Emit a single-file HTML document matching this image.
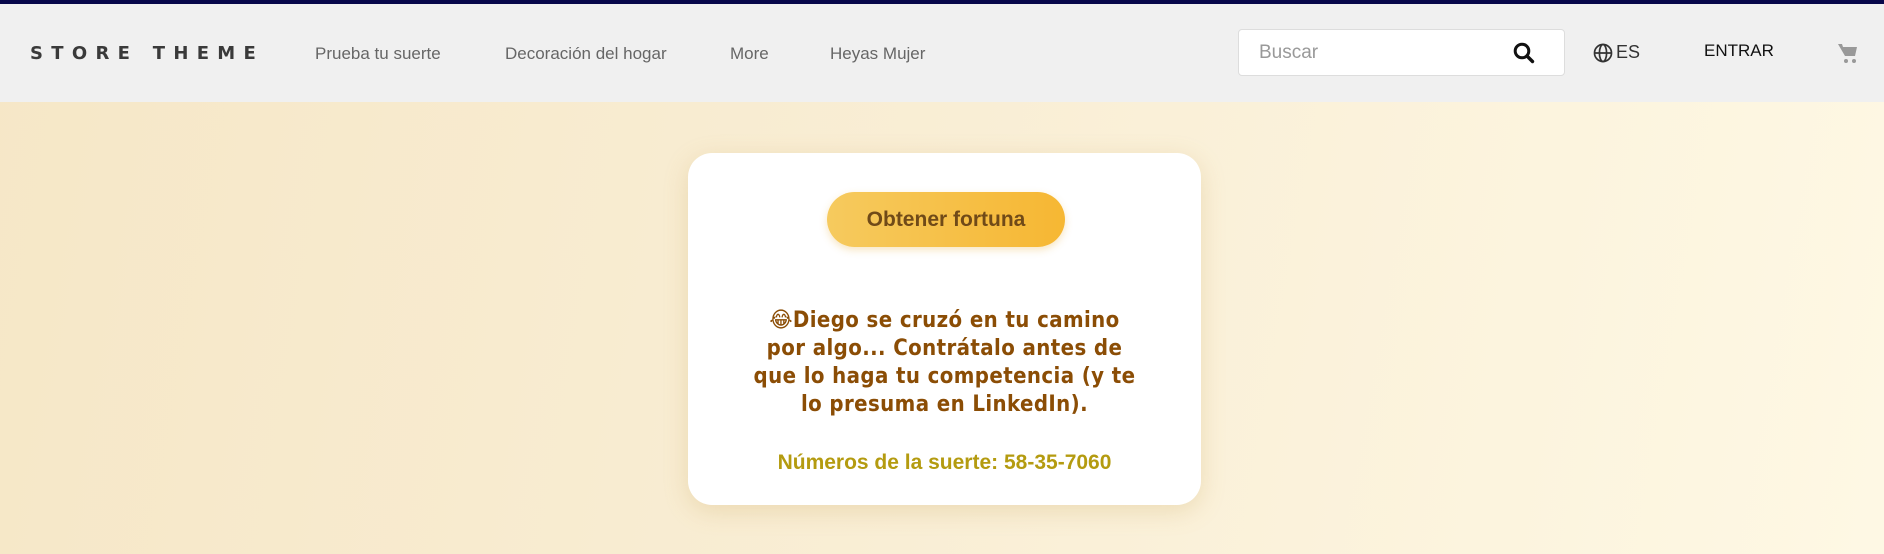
<!DOCTYPE html>
<html><head><meta charset="utf-8"><style>
*{margin:0;padding:0;box-sizing:border-box}
body{width:1884px;height:554px;overflow:hidden;font-family:"Liberation Sans",sans-serif;background:linear-gradient(100deg,#f6e7c7 0%,#f9eed5 50%,#fef8e4 100%);position:relative}
.top{position:absolute;left:0;top:0;width:1884px;height:4px;background:#07074a}
.hdr{position:absolute;left:0;top:4px;width:1884px;height:98px;background:#f0f0f0}
.logo{position:absolute;left:30px;top:39px;font-family:"DejaVu Sans",sans-serif;font-weight:bold;font-size:18px;letter-spacing:8.3px;color:#3a3a3a}
.nav{position:absolute;top:40px;font-size:17px;color:#666}
.search{position:absolute;left:1238px;top:25px;width:327px;height:47px;background:#fff;border:1px solid #ddd;border-radius:4px}
.search span{position:absolute;left:20px;top:12px;font-size:19px;color:#999}
.card{position:absolute;left:688px;top:153px;width:513px;height:352px;background:#fff;border-radius:24px;box-shadow:0 6px 24px rgba(200,160,80,.25)}
.btn{position:absolute;left:139px;top:39px;width:238px;height:55px;border-radius:28px;background:linear-gradient(90deg,#f6ca5e,#f6b733);box-shadow:0 3px 8px rgba(230,170,50,.3);color:#704a18;font-weight:bold;font-size:21px;text-align:center;line-height:55px}
.msg{position:absolute;left:0;width:513px;top:154px;text-align:center;font-family:"DejaVu Sans Condensed","DejaVu Sans",sans-serif;font-weight:bold;font-size:22px;letter-spacing:0.4px;line-height:28px;color:#8b4d05;white-space:nowrap}
.num{position:absolute;left:0;width:513px;top:298px;text-align:center;font-weight:bold;font-size:21px;color:#b49b10}
</style></head><body>
<div class="top"></div>
<div class="hdr">
<div class="logo">STORE THEME</div>
<div class="nav" style="left:315px">Prueba tu suerte</div>
<div class="nav" style="left:505px">Decoración del hogar</div>
<div class="nav" style="left:730px">More</div>
<div class="nav" style="left:830px">Heyas Mujer</div>
<div class="search"><span>Buscar</span>
<svg style="position:absolute;left:274px;top:12px" width="22" height="22" viewBox="0 0 22 22"><circle cx="9" cy="9" r="6.8" fill="none" stroke="#111" stroke-width="3"/><path d="M14 14l5.5 5.5" stroke="#111" stroke-width="3.4" stroke-linecap="round"/></svg></div>
<svg style="position:absolute;left:1593px;top:39px" width="20" height="20" viewBox="0 0 20 20" fill="none" stroke="#333" stroke-width="1.7"><circle cx="10" cy="10" r="8.5"/><ellipse cx="10" cy="10" rx="3.6" ry="8.5"/><path d="M1.5 10h17"/></svg>
<div class="nav" style="left:1616px;top:38px;color:#333;font-size:18px">ES</div>
<div class="nav" style="left:1704px;top:37px;color:#111;font-size:17px">ENTRAR</div>
<svg style="position:absolute;left:1838px;top:39px" width="20" height="22" viewBox="0 0 20 22" fill="#999"><path d="M0 1h4l1 3h14l-2 9H7z"/><circle cx="8" cy="18" r="2"/><circle cx="16" cy="18" r="2"/></svg>
</div>
<div class="card">
<div class="btn">Obtener fortuna</div>
<div class="msg">😂Diego se cruzó en tu camino<br>por algo... Contrátalo antes de<br>que lo haga tu competencia (y te<br>lo presuma en LinkedIn).</div>
<div class="num">Números de la suerte: 58-35-7060</div>
</div>
</body></html>
